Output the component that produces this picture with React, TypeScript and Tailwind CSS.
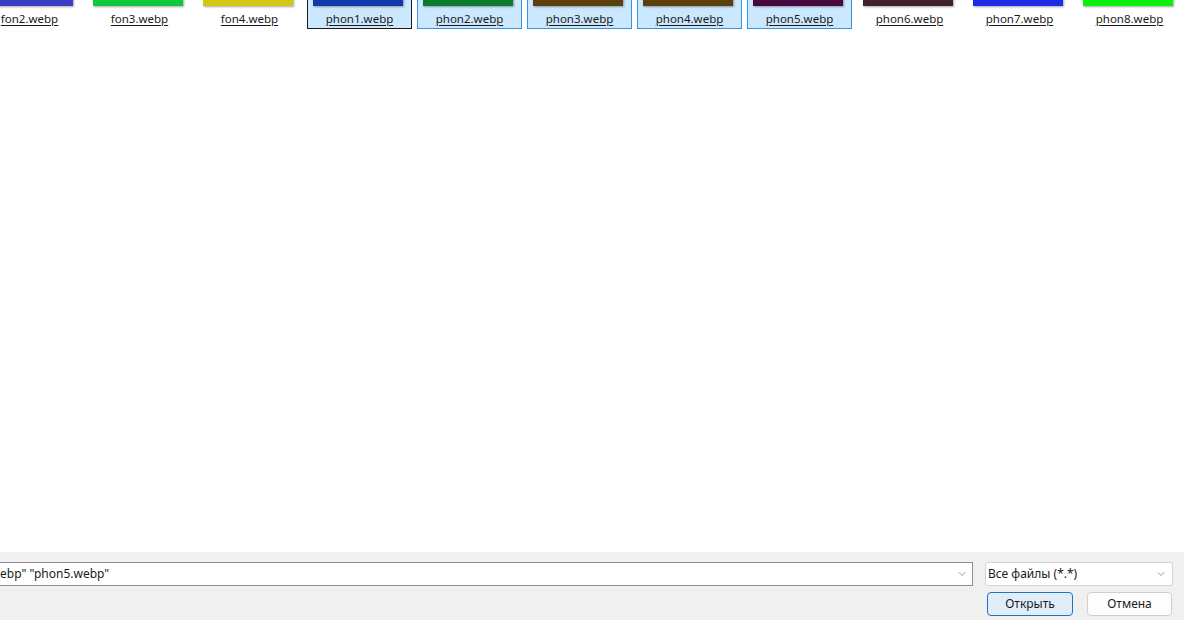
import { ChevronDown } from 'lucide-react'

type Item = {
  name: string
  color: string
  selected?: boolean
  focused?: boolean
}

const items: Item[] = [
  { name: 'fon2.webp', color: '#3a3ec4' },
  { name: 'fon3.webp', color: '#10c83c' },
  { name: 'fon4.webp', color: '#d2c812' },
  { name: 'phon1.webp', color: '#1239ac', selected: true, focused: true },
  { name: 'phon2.webp', color: '#0b7a2a', selected: true },
  { name: 'phon3.webp', color: '#5c400c', selected: true },
  { name: 'phon4.webp', color: '#5c400c', selected: true },
  { name: 'phon5.webp', color: '#470842', selected: true },
  { name: 'phon6.webp', color: '#40232a' },
  { name: 'phon7.webp', color: '#1e2ae6' },
  { name: 'phon8.webp', color: '#0af00c' },
]

const font = { fontFamily: '"Noto Sans", "Open Sans", sans-serif' }

function Tile({ item }: { item: Item }) {
  const border = item.focused
    ? 'border-[#1a1a1a] bg-[#cce8ff]'
    : item.selected
      ? 'border-[#3a93dc] bg-[#cce8ff]'
      : 'border-transparent'
  return (
    <div className={`flex h-[80px] w-[105px] shrink-0 flex-col items-center justify-end border pb-[2px] ${border}`}>
      <div
        className="ml-[5px] h-[50px] w-[90px] self-start shadow-[1px_1px_2px_rgba(0,0,0,0.35)]"
        style={{ backgroundColor: item.color }}
      />
      <span className="mt-[5px] text-[11.5px] leading-[15px] text-[#1a1a1a] underline underline-offset-2">
        {item.name}
      </span>
    </div>
  )
}

export default function App() {
  return (
    <div className="flex h-[620px] w-[1184px] flex-col overflow-hidden bg-white" style={font}>
      <div className="flex-1 overflow-hidden">
        <div className="ml-[-23px] mt-[-51px] flex gap-[5px]">
          {items.map((item) => (
            <Tile key={item.name} item={item} />
          ))}
        </div>
      </div>

      <div className="flex h-[68px] flex-col bg-[#f0f0f0] pt-[10px]">
        <div className="flex items-center">
          <div className="flex h-[24px] w-[973px] items-center border-y border-r border-[#8f8f8f] bg-white pr-[4px]">
            <span className="flex-1 whitespace-nowrap text-[12px] text-[#1a1a1a]">ebp" "phon5.webp"</span>
            <ChevronDown className="h-[12px] w-[12px] text-[#606060]" strokeWidth={1.25} />
          </div>
          <div className="ml-[12px] flex h-[24px] w-[188px] items-center rounded-[3px] border border-[#d4d4d4] bg-white pl-[2px] pr-[5px]">
            <span className="flex-1 text-[12px] text-[#1a1a1a]">Все файлы (*.*)</span>
            <ChevronDown className="h-[12px] w-[12px] text-[#606060]" strokeWidth={1.25} />
          </div>
        </div>
        <div className="mt-[6px] flex justify-end gap-[14px] pr-[12px]">
          <button className="h-[24px] w-[86px] rounded-[4px] border border-[#1c73c4] bg-[#e1eefa] text-[12px] text-[#1a1a1a]">
            Открыть
          </button>
          <button className="h-[24px] w-[85px] rounded-[4px] border border-[#d0d0d0] bg-[#fdfdfd] text-[12px] text-[#1a1a1a]">
            Отмена
          </button>
        </div>
      </div>
    </div>
  )
}
